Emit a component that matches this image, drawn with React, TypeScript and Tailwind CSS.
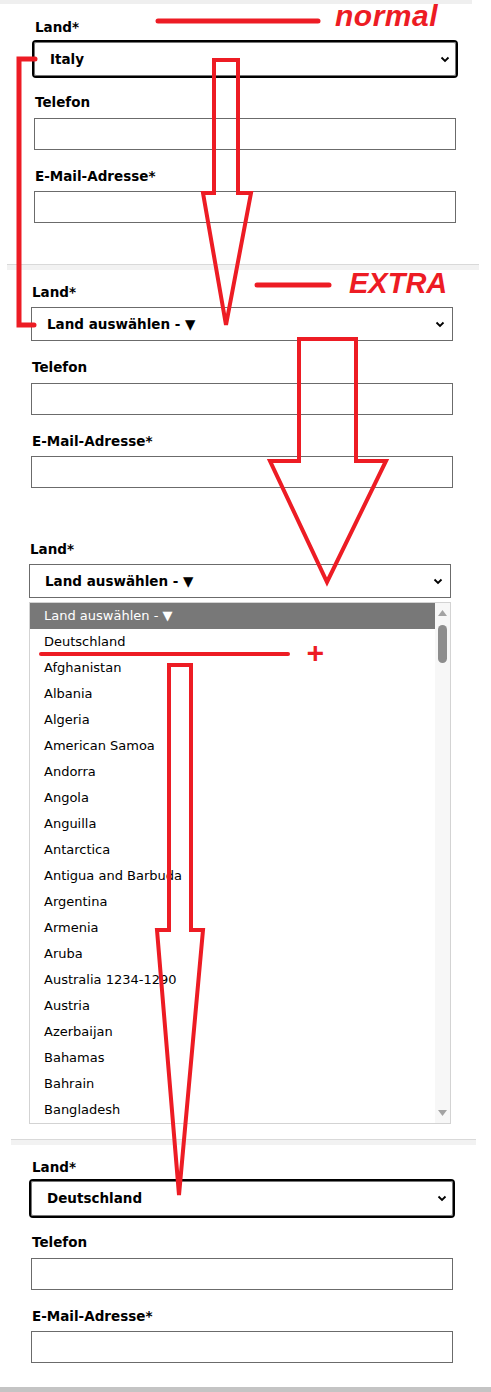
import React from "react";

const countries = [
  "Deutschland",
  "Afghanistan",
  "Albania",
  "Algeria",
  "American Samoa",
  "Andorra",
  "Angola",
  "Anguilla",
  "Antarctica",
  "Antigua and Barbuda",
  "Argentina",
  "Armenia",
  "Aruba",
  "Australia 1234-1290",
  "Austria",
  "Azerbaijan",
  "Bahamas",
  "Bahrain",
  "Bangladesh",
];

function Chevron() {
  return (
    <svg width="10" height="7" viewBox="0 0 10 7" className="shrink-0">
      <polyline points="1.5,1.5 5,5 8.5,1.5" fill="none" stroke="#000" strokeWidth="1.8" />
    </svg>
  );
}

function Label({ text, className = "" }: { text: string; className?: string }) {
  return <div className={`h-[16px] leading-[16px] text-[13.5px] font-bold text-black ${className}`}>{text}</div>;
}

function Input({ className = "" }: { className?: string }) {
  return <div className={`h-[32px] w-[422px] border border-[#6b6b6b] bg-white ${className}`} />;
}

function PlainSelect({ value, className = "" }: { value: string; className?: string }) {
  return (
    <div className={`h-[34px] w-[422px] border border-[#6b6b6b] bg-white flex items-center justify-between pl-[15px] pr-[7px] ${className}`}>
      <span className="text-[13.5px] font-bold text-black">{value}</span>
      <Chevron />
    </div>
  );
}

function FocusedSelect({ value, className = "" }: { value: string; className?: string }) {
  return (
    <div className={`w-[426px] border-2 border-black rounded-[4px] bg-white ${className}`}>
      <div className="border border-[#767676] rounded-[2px] flex items-center justify-between pl-[15px] pr-[5px] h-full">
        <span className="text-[13.5px] font-bold text-black">{value}</span>
        <Chevron />
      </div>
    </div>
  );
}

function Separator({ className = "" }: { className?: string }) {
  return <div className={`h-[6px] bg-[#f2f2f2] border-t border-[#d9d9d9] ${className}`} />;
}

function Annotations() {
  const red = "#ed1c24";
  return (
    <>
      <svg className="absolute left-0 top-0 pointer-events-none" width="491" height="1392" viewBox="0 0 491 1392">
        {/* underline strokes */}
        <line x1="158" y1="21" x2="318" y2="21" stroke={red} strokeWidth="5" strokeLinecap="round" />
        <line x1="257" y1="285" x2="329" y2="285" stroke={red} strokeWidth="5" strokeLinecap="round" />
        <line x1="41" y1="654" x2="288" y2="654" stroke={red} strokeWidth="4" strokeLinecap="round" />
        {/* bracket */}
        <polyline points="35,59 19,59 19,325 34,325" fill="none" stroke={red} strokeWidth="5" strokeLinecap="round" />
        {/* arrow 1 */}
        <polygon
          points="214,60 238,60 238,193 251,193 226,325 203,193 214,193"
          fill="none"
          stroke={red}
          strokeWidth="4"
        />
        {/* arrow 2 */}
        <polygon
          points="299,339 356,339 356,461 386,461 327,582 270,461 299,461"
          fill="none"
          stroke={red}
          strokeWidth="4"
        />
        {/* arrow 3 */}
        <polygon
          points="169,665 191,665 191,930 203,930 179,1195 157,930 169,930"
          fill="none"
          stroke={red}
          strokeWidth="4"
        />
      </svg>
      <span className="absolute left-[335px] top-[1px] leading-none text-[30px] font-bold italic tracking-[0.5px] text-[#ed1c24] font-['Liberation_Sans',Arial,sans-serif]">
        normal
      </span>
      <span className="absolute left-[349px] top-[269px] leading-none text-[29px] font-bold italic text-[#ed1c24] font-['Liberation_Sans',Arial,sans-serif]">
        EXTRA
      </span>
      <span className="absolute left-[306px] top-[638px] leading-none text-[30px] font-bold italic text-[#ed1c24] font-['Liberation_Sans',Arial,sans-serif]">
        +
      </span>
    </>
  );
}

export default function App() {
  return (
    <div className="relative w-[491px] h-[1392px] bg-white overflow-hidden font-['DejaVu_Sans',sans-serif]">
      <div className="h-[4px] w-[472px] bg-[#efefef]" />

      {/* normal */}
      <div className="pl-[34px]">
        <Label text="Land*" className="mt-[15px] ml-[1px]" />
        <FocusedSelect value="Italy" className="mt-[5px] -ml-[2px] h-[38px]" />
        <Label text="Telefon" className="mt-[16px] ml-[1px]" />
        <Input className="mt-[8px]" />
        <Label text="E-Mail-Adresse*" className="mt-[18px] ml-[1px]" />
        <Input className="mt-[7px]" />
      </div>

      <Separator className="mt-[41px] ml-[7px] w-[472px]" />

      {/* extra */}
      <div className="pl-[31px]">
        <Label text="Land*" className="mt-[14px] ml-[1px]" />
        <PlainSelect value="Land auswählen - ▼" className="mt-[7px]" />
        <Label text="Telefon" className="mt-[18px] ml-[1px]" />
        <Input className="mt-[8px]" />
        <Label text="E-Mail-Adresse*" className="mt-[18px] ml-[1px]" />
        <Input className="mt-[7px]" />
      </div>

      {/* open list */}
      <div className="pl-[29px]">
        <Label text="Land*" className="mt-[53px] ml-[1px]" />
        <PlainSelect value="Land auswählen - ▼" className="mt-[7px]" />
        <div className="mt-[4px] w-[422px] h-[522px] border border-[#d3d3d3] flex">
          <div className="flex-1">
            <div className="h-[26px] leading-[26px] bg-[#787878] text-white text-[13px] pl-[14px]">Land auswählen - ▼</div>
            {countries.map((c) => (
              <div key={c} className="h-[26px] leading-[26px] text-black text-[13px] pl-[14px] whitespace-nowrap">
                {c}
              </div>
            ))}
          </div>
          <div className="w-[15px] bg-[#f7f7f7] flex flex-col items-center justify-between py-[7px]">
            <div className="flex flex-col items-center">
              <svg width="9" height="6" viewBox="0 0 9 6">
                <polygon points="4.5,0 9,6 0,6" fill="#a3a3a3" />
              </svg>
              <div className="mt-[9px] w-[9px] h-[38px] rounded-full bg-[#8d8d8d]" />
            </div>
            <svg width="9" height="6" viewBox="0 0 9 6">
              <polygon points="0,0 9,0 4.5,6" fill="#a3a3a3" />
            </svg>
          </div>
        </div>
      </div>

      <Separator className="mt-[15px] ml-[11px] w-[465px]" />

      {/* result */}
      <div className="pl-[31px]">
        <Label text="Land*" className="mt-[14px] ml-[1px]" />
        <FocusedSelect value="Deutschland" className="mt-[4px] -ml-[2px] h-[39px]" />
        <Label text="Telefon" className="mt-[16px] ml-[1px]" />
        <Input className="mt-[8px]" />
        <Label text="E-Mail-Adresse*" className="mt-[18px] ml-[1px]" />
        <Input className="mt-[7px]" />
      </div>

      <div className="mt-[24px] h-[5px] w-full bg-[#c4c4c4]" />

      <Annotations />
    </div>
  );
}
